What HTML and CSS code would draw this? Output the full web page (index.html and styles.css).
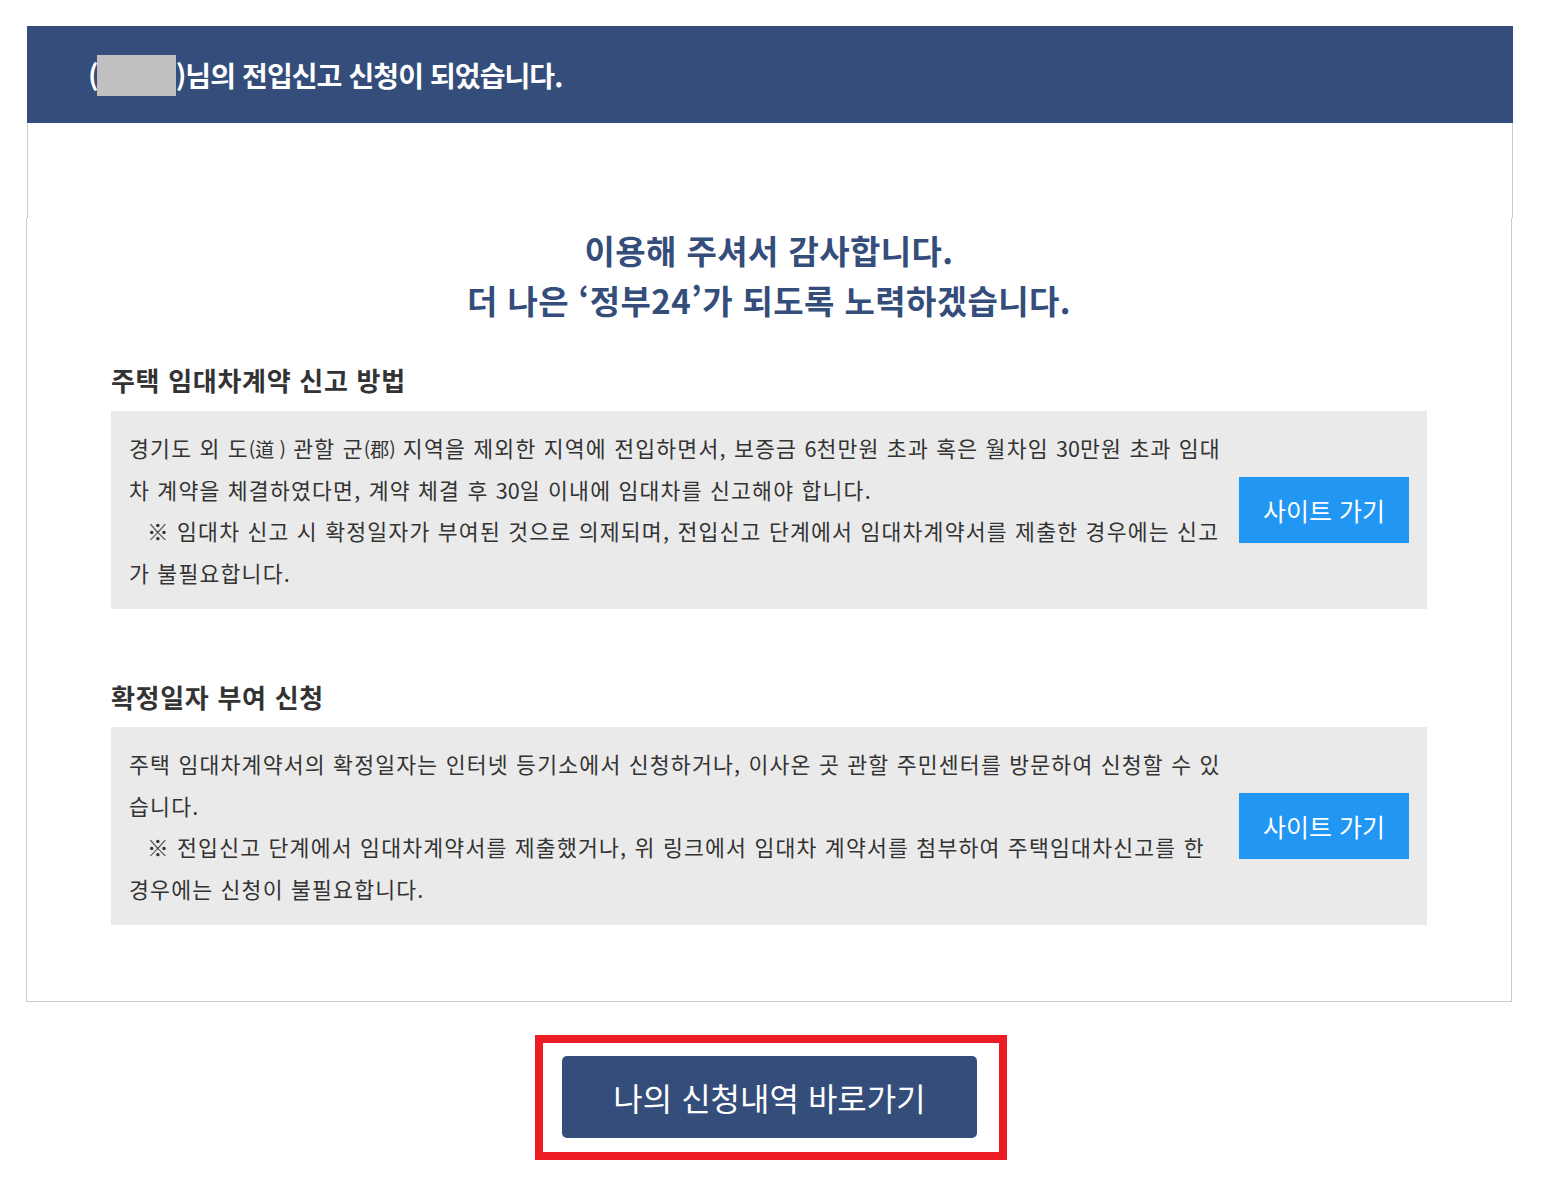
FILE: index.html
```html
<!DOCTYPE html>
<html lang="ko">
<head>
<meta charset="utf-8">
<title>전입신고 신청 완료</title>
<link rel="stylesheet" href="styles.css">
</head>
<body>
<div class="wrap">
  <div class="head">
    <h1 class="head-title">(<span class="mask"></span>)님의 전입신고 신청이 되었습니다.</h1>
  </div>
  <div class="spacer"></div>
  <div class="content">
    <p class="thanks">이용해 주셔서 감사합니다.<br>더 나은 ‘정부24’가 되도록 노력하겠습니다.</p>

    <h2 class="sec-title first">주택 임대차계약 신고 방법</h2>
    <div class="info-box">
      <div class="info-text">
        <p>경기도 외 도<span class="hj">(道 )</span> 관할 군<span class="hj">(郡)</span> 지역을 제외한 지역에 전입하면서, 보증금 <span class="num">6</span>천만원 초과 혹은 월차임 <span class="num">30</span>만원 초과 임대<br>차 계약을 체결하였다면, 계약 체결 후 <span class="num">30</span>일 이내에 임대차를 신고해야 합니다.</p>
        <p class="note">※ 임대차 신고 시 확정일자가 부여된 것으로 의제되며, 전입신고 단계에서 임대차계약서를 제출한 경우에는 신고<br>가 불필요합니다.</p>
      </div>
      <a class="site-btn" href="#">사이트 가기</a>
    </div>

    <h2 class="sec-title second">확정일자 부여 신청</h2>
    <div class="info-box">
      <div class="info-text">
        <p>주택 임대차계약서의 확정일자는 인터넷 등기소에서 신청하거나, 이사온 곳 관할 주민센터를 방문하여 신청할 수 있<br>습니다.</p>
        <p class="note">※ 전입신고 단계에서 임대차계약서를 제출했거나, 위 링크에서 임대차 계약서를 첨부하여 주택임대차신고를 한<br>경우에는 신청이 불필요합니다.</p>
      </div>
      <a class="site-btn" href="#">사이트 가기</a>
    </div>
  </div>
</div>
<div class="bottom">
  <div class="highlight">
    <a class="my-btn" href="#">나의 신청내역 바로가기</a>
  </div>
</div>
</body>
</html>
```

FILE: styles.css
```css
* { box-sizing: border-box; }
html, body { margin: 0; padding: 0; background: #fff; }
body {
  font-family: "Noto Sans CJK KR", "Noto Sans", sans-serif;
  color: #333;
}
.wrap {
  margin: 26px 0 0 27px;
  width: 1486px;
}
.head {
  background: #344d7a;
  height: 97px;
  display: flex;
  align-items: center;
  padding-left: 61px;
}
.head-title {
  margin: 0;
  color: #fff;
  font-size: 28px;
  font-weight: 700;
  letter-spacing: -0.9px;
  line-height: 40px;
  display: flex;
  align-items: center;
}
.mask {
  display: inline-block;
  width: 79px;
  height: 41px;
  background: #c0c0c0;
  margin: 2px 0 0 -1px;
}
.spacer {
  height: 95px;
  border-left: 1px solid #ccc;
  border-right: 1px solid #ccc;
}
.content {
  margin-left: -1px;
  width: 1486px;
  border: 1px solid #ccc;
  border-top: 0;
  padding: 7px 84px 76px 84px;
}
.thanks {
  margin: 0;
  text-align: center;
  color: #344d7a;
  font-size: 33px;
  font-weight: 700;
  line-height: 50px;
  letter-spacing: 0.4px;
}
.sec-title {
  margin: 0;
  font-size: 26px;
  font-weight: 700;
  line-height: 36px;
  letter-spacing: 0.7px;
  color: #333;
}
.sec-title.first { margin-top: 37px; margin-bottom: 13px; }
.sec-title.second { margin-top: 70px; margin-bottom: 12px; }
.info-box {
  background: #eaeaea;
  display: flex;
  align-items: center;
  gap: 10px;
  padding: 16px 18px 16px 18px;
}
.info-text {
  width: 1102px;
  font-size: 21.6px;
  line-height: 41.5px;
  letter-spacing: 1.2px;
  color: #333;
}
.info-text p { margin: 0; }
.info-text .note { text-indent: 18px; }
.hj {
  font-size: 19px;
  line-height: 1;
  letter-spacing: 0;
}
.num { letter-spacing: 0; }
.site-btn {
  flex: none;
  width: 170px;
  height: 66px;
  display: flex;
  align-items: center;
  justify-content: center;
  background: #2196f3;
  color: #fff;
  font-size: 25px;
  text-decoration: none;
}
.bottom {
  display: flex;
  justify-content: center;
  padding: 33px 0 0 0;
  margin-left: 1px;
}
.highlight {
  border: 8px solid #ed1c24;
  padding: 13px 22px 14px 19px;
}
.my-btn {
  width: 415px;
  height: 82px;
  display: flex;
  align-items: center;
  justify-content: center;
  background: #344d7a;
  color: #fff;
  border-radius: 5px;
  font-size: 32px;
  text-decoration: none;
}
```
